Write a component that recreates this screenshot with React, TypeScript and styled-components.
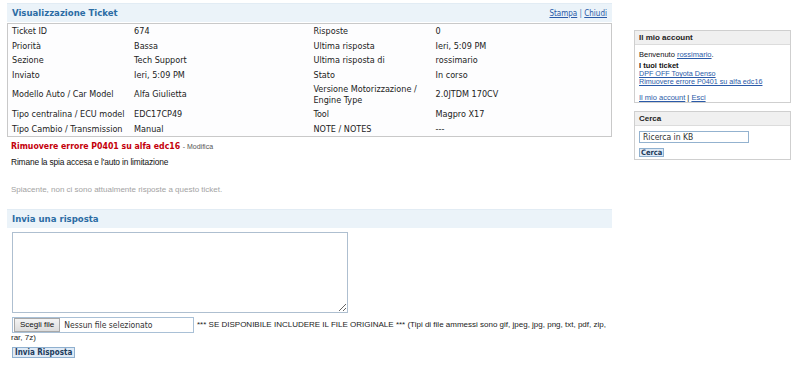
import React from 'react';
import styled, { createGlobalStyle } from 'styled-components';

const condensed = `"DejaVu Sans Condensed", "DejaVu Sans", Verdana, sans-serif`;
const arial = `"Liberation Sans", Arial, sans-serif`;

const GlobalStyle = createGlobalStyle`
  html, body {
    margin: 0;
    padding: 0;
    background: #ffffff;
  }
`;

const Page = styled.div`
  display: flex;
  align-items: flex-start;
  padding: 3px 0 0 7px;
`;

const Main = styled.div`
  width: 605px;
  flex-shrink: 0;
`;

const SectionBar = styled.div`
  height: 18px;
  border-top: 1px solid #e2ecf4;
  background: #ebf3f9;
  display: flex;
  align-items: center;
  justify-content: space-between;
  padding: 0 5px;
  font-size: 9px;
`;

const SectionTitle = styled.h2`
  margin: 0 0 1px;
  font-family: ${condensed};
  font-stretch: condensed;
  font-size: 9.5px;
  line-height: 12px;
  font-weight: bold;
  color: #2c6ca4;
`;

const BarLinks = styled.div`
  font-family: ${condensed};
  font-stretch: condensed;
  font-size: 8px;
  line-height: 10px;
  color: #4a79b0;
  padding-top: 2px;
`;

const Link = styled.a`
  color: #2a5aa8;
  text-decoration: underline;
  cursor: pointer;
`;

const InfoTable = styled.table`
  width: 100%;
  margin-top: 1px;
  border: 1px solid #c9c9c9;
  border-collapse: collapse;
  table-layout: fixed;
  background: #fdfdfe;
`;

const Cell = styled.td<{ $w?: string }>`
  width: ${p => p.$w || 'auto'};
  padding: 2px 4px;
  font-family: ${condensed};
  font-stretch: condensed;
  font-size: 9px;
  line-height: 10.5px;
  color: #222;
  vertical-align: middle;
`;

const Subject = styled.div`
  padding: 3px 4px 0;
  font-family: ${condensed};
  font-size: 8.7px;
  line-height: 12px;
`;

const SubjectTitle = styled.span`
  font-family: ${condensed};
  font-stretch: condensed;
  font-size: 8.7px;
  font-weight: bold;
  color: #c4000a;
`;

const EditLink = styled.span`
  font-family: ${arial};
  font-size: 7px;
  color: #555;
`;

const Message = styled.p`
  margin: 4px 4px 0;
  font-family: ${arial};
  font-size: 8.4px;
  letter-spacing: -0.15px;
  line-height: 10px;
  color: #111;
`;

const EmptyNote = styled.p`
  margin: 18px 4px 14px;
  font-family: ${arial};
  font-size: 8px;
  line-height: 10px;
  color: #a3a3a3;
`;

const ReplyForm = styled.form`
  padding: 4px 0 0 5px;
`;

const ReplyArea = styled.textarea`
  display: block;
  width: 336px;
  height: 81px;
  box-sizing: border-box;
  border: 1px solid #aebfd0;
  margin: 0;
`;

const AttachRow = styled.div`
  margin-top: 5px;
  margin-left: -1px;
  font-family: ${arial};
  font-size: 8px;
  line-height: 13px;
  color: #222;
`;

const FileBox = styled.span`
  display: inline-flex;
  align-items: center;
  box-sizing: border-box;
  width: 182px;
  height: 16px;
  border: 1px solid #a9c0d6;
  margin: -2px 3px -2px 1px;
  vertical-align: middle;
`;

const FileButton = styled.span`
  display: inline-flex;
  align-items: center;
  height: 14px;
  padding: 0 5px;
  margin-left: 1px;
  border: 1px solid #a8a8a8;
  background: linear-gradient(#f4f4f4, #dcdcdc);
  font-family: ${arial};
  font-size: 8px;
  line-height: 10px;
  color: #111;
  box-sizing: border-box;
`;

const FileName = styled.span`
  margin-left: 4px;
  font-family: ${condensed};
  font-stretch: condensed;
  font-size: 8.5px;
  line-height: 10px;
  color: #333;
`;

const SubmitButton = styled.button`
  display: block;
  margin-top: 3px;
  height: 11px;
  padding: 0 2px;
  border: 1px solid #8fb0cf;
  background: #dfeaf6;
  font-family: ${condensed};
  font-stretch: condensed;
  font-size: 8px;
  font-weight: bold;
  line-height: 9px;
  color: #1d3c5c;
`;

const Sidebar = styled.aside`
  width: 157px;
  margin-left: 22px;
  margin-top: 27px;
  display: flex;
  flex-direction: column;
  gap: 8px;
`;

const SideBox = styled.div`
  border: 1px solid #cfcfcf;
  background: #fff;
`;

const SideHeader = styled.div`
  height: 13px;
  background: #f0f0f0;
  border-bottom: 1px solid #dcdcdc;
  padding: 0 4px;
  font-family: ${arial};
  font-size: 8px;
  font-weight: bold;
  line-height: 14px;
  color: #222;
`;

const SideBody = styled.div<{ $pb?: number }>`
  padding: 5px 4px ${p => p.$pb ?? 0}px;
  font-family: ${arial};
  font-size: 7.5px;
  line-height: 9px;
  color: #111;
`;

const TicketList = styled.div`
  margin-top: 3px;
  line-height: 8px;
`;

const Strong = styled.div`
  font-weight: bold;
`;

const SmallLink = styled(Link)`
  font-size: 7.2px;
`;

const SearchInput = styled.div`
  box-sizing: border-box;
  width: 110px;
  height: 12px;
  border: 1px solid #93b2cf;
  padding: 0 3px;
  font-family: ${condensed};
  font-stretch: condensed;
  font-size: 8.5px;
  line-height: 10px;
  color: #333;
`;

const SearchButton = styled.button`
  display: block;
  margin-top: 5px;
  height: 9px;
  padding: 0 1px;
  border: 1px solid #8fb0cf;
  background: #dfeaf6;
  font-family: ${condensed};
  font-stretch: condensed;
  font-size: 7.5px;
  font-weight: bold;
  line-height: 7px;
  color: #1d3c5c;
`;

const rows: [string, string, string, string][] = [
  ['Ticket ID', '674', 'Risposte', '0'],
  ['Priorità', 'Bassa', 'Ultima risposta', 'Ieri, 5:09 PM'],
  ['Sezione', 'Tech Support', 'Ultima risposta di', 'rossimario'],
  ['Inviato', 'Ieri, 5:09 PM', 'Stato', 'In corso'],
  ['Modello Auto / Car Model', 'Alfa Giulietta', 'Versione Motorizzazione /|Engine Type', '2.0JTDM 170CV'],
  ['Tipo centralina / ECU model', 'EDC17CP49', 'Tool', 'Magpro X17'],
  ['Tipo Cambio / Transmission', 'Manual', 'NOTE / NOTES', '---'],
];

const renderLabel = (text: string) => {
  const parts = text.split('|');
  return parts.map((p, i) => (
    <React.Fragment key={i}>
      {i > 0 && <br />}
      {p}
    </React.Fragment>
  ));
};

const App: React.FC = () => {
  return (
    <>
      <GlobalStyle />
      <Page>
        <Main>
          <SectionBar>
            <SectionTitle>Visualizzazione Ticket</SectionTitle>
            <BarLinks>
              <Link>Stampa</Link> | <Link>Chiudi</Link>
            </BarLinks>
          </SectionBar>

          <InfoTable>
            <tbody>
              {rows.map((r, i) => (
                <tr key={i}>
                  <Cell $w="20%">{r[0]}</Cell>
                  <Cell $w="30%">{r[1]}</Cell>
                  <Cell $w="20%">{renderLabel(r[2])}</Cell>
                  <Cell $w="30%">{r[3]}</Cell>
                </tr>
              ))}
            </tbody>
          </InfoTable>

          <Subject>
            <SubjectTitle>Rimuovere errore P0401 su alfa edc16</SubjectTitle>{' '}
            <EditLink>- Modifica</EditLink>
          </Subject>
          <Message>Rimane la spia accesa e l'auto in limitazione</Message>

          <EmptyNote>Spiacente, non ci sono attualmente risposte a questo ticket.</EmptyNote>

          <SectionBar>
            <SectionTitle>Invia una risposta</SectionTitle>
          </SectionBar>

          <ReplyForm onSubmit={e => e.preventDefault()}>
            <ReplyArea />
            <AttachRow>
              <FileBox>
                <FileButton>Scegli file</FileButton>
                <FileName>Nessun file selezionato</FileName>
              </FileBox>
              <span>*** SE DISPONIBILE INCLUDERE IL FILE ORIGINALE *** (Tipi di file ammessi sono gif, jpeg, jpg, png, txt, pdf, zip,</span>
              <br />
              <span>rar, 7z)</span>
            </AttachRow>
            <SubmitButton type="submit">Invia Risposta</SubmitButton>
          </ReplyForm>
        </Main>

        <Sidebar>
          <SideBox>
            <SideHeader>Il mio account</SideHeader>
            <SideBody>
              Benvenuto <Link>rossimario</Link>.
              <TicketList>
                <Strong>I tuoi ticket</Strong>
                <SmallLink>DPF OFF Toyota Denso</SmallLink>
                <br />
                <SmallLink>Rimuovere errore P0401 su alfa edc16</SmallLink>
                <br />
                <br />
                <Link>Il mio account</Link> | <Link>Esci</Link>
              </TicketList>
            </SideBody>
          </SideBox>
          <SideBox>
            <SideHeader>Cerca</SideHeader>
            <SideBody $pb={2}>
              <SearchInput>Ricerca in KB</SearchInput>
              <SearchButton>Cerca</SearchButton>
            </SideBody>
          </SideBox>
        </Sidebar>
      </Page>
    </>
  );
};

export default App;
